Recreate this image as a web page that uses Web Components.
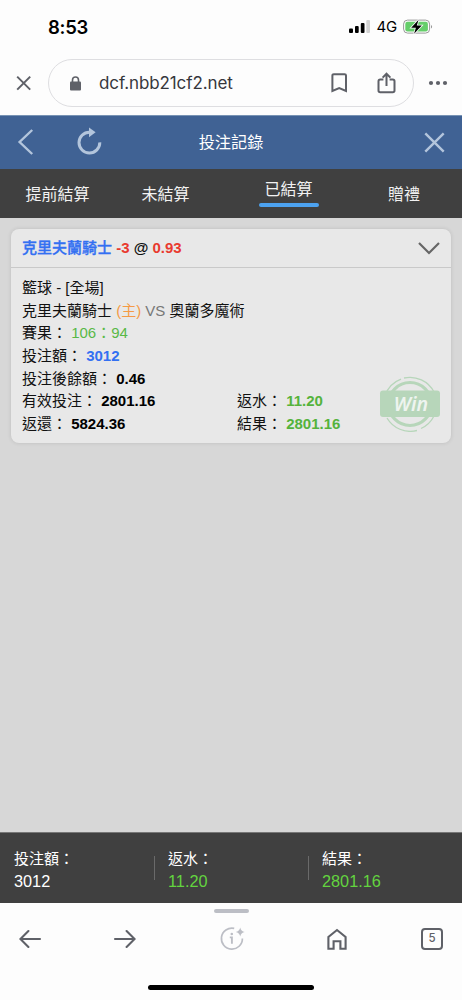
<!DOCTYPE html>
<html lang="zh-Hant">
<head>
<meta charset="utf-8">
<meta name="viewport" content="width=device-width, initial-scale=1">
<title>投注記錄</title>
<style>
  body {
    margin: 0;
    height: 1000px;
    display: flex;
    flex-direction: column;
    overflow: hidden;
    background: #d7d7d7;
    font-family: "Liberation Sans", "Noto Sans CJK TC", sans-serif;
    font-size: 15px;
  }

  main {
    flex: 1;
    padding: 11px;
  }
</style>
</head>
<body>
  <status-bar time="8:53" network="4G"></status-bar>
  <address-bar>dcf.nbb21cf2.net</address-bar>
  <page-header>投注記錄</page-header>
  <tab-bar>
    <tab-item>提前結算</tab-item>
    <tab-item>未結算</tab-item>
    <tab-item active>已結算</tab-item>
    <tab-item>贈禮</tab-item>
  </tab-bar>
  <main>
    <bet-card team="克里夫蘭騎士" handicap="-3" odds="0.93">
      <bet-field wide>籃球 - [全場]</bet-field>
      <bet-field wide>克里夫蘭騎士 <span style="color:#f59a45">(主)</span> <span style="color:#777">VS</span> 奧蘭多魔術</bet-field>
      <bet-field wide label="賽果" tone="score">106：94</bet-field>
      <bet-field wide label="投注額" tone="stake">3012</bet-field>
      <bet-field wide label="投注後餘額" tone="plain">0.46</bet-field>
      <bet-field label="有效投注" tone="plain">2801.16</bet-field>
      <bet-field label="返水" tone="win">11.20</bet-field>
      <bet-field label="返還" tone="plain">5824.36</bet-field>
      <bet-field label="結果" tone="win">2801.16</bet-field>
      <win-stamp slot="stamp">Win</win-stamp>
    </bet-card>
  </main>
  <summary-bar>
    <summary-item label="投注額">3012</summary-item>
    <summary-item label="返水" positive>11.20</summary-item>
    <summary-item label="結果" positive>2801.16</summary-item>
  </summary-bar>
  <browser-toolbar tabs="5"></browser-toolbar>

<script>
// Attach an open shadow root with the given markup
function render(element, html) {
  element.attachShadow({ mode: "open" }).innerHTML = html;
}

class StatusBar extends HTMLElement {
  connectedCallback() {
    render(this, `
      <style>
        :host {
          display: flex;
          align-items: center;
          box-sizing: border-box;
          height: 59px;
          padding: 0 29px 6px 48px;
          background: #fdfdfd;
          color: #000;
          font-family: Inter, sans-serif;
        }
        .time { flex: 1; font-size: 18.5px; font-weight: 600; letter-spacing: -0.3px; }
        .network { margin: 0 6px 0 7px; font-size: 15px; font-weight: 400; letter-spacing: -0.2px; }
        svg { display: block; }
      </style>
      <span class="time">${this.getAttribute("time")}</span>
      <svg width="21" height="13" viewBox="0 0 21 13">
        <rect x="0" y="8.5" width="4" height="4.5" rx="1"/>
        <rect x="6" y="6" width="3.7" height="7" rx="1"/>
        <rect x="11.8" y="3" width="3.7" height="10" rx="1"/>
        <rect x="17.3" y="0" width="3.7" height="13" rx="1" fill="#d2d2d2"/>
      </svg>
      <span class="network">${this.getAttribute("network")}</span>
      <svg width="30" height="16" viewBox="0 0 30 16">
        <rect x=".6" y="1.1" width="26" height="13" rx="4" fill="none" stroke="#999" stroke-width="1"/>
        <rect x="2.3" y="2.8" width="22.6" height="9.6" rx="2.2" fill="#65ce6a"/>
        <path d="M28 6v3.6c1.5-.6 1.5-3 0-3.6z" fill="#999"/>
        <path d="M15.6.7 8.2 8.8h4.7l-1.8 6 7.7-8.2h-5z" stroke="#fdfdfd" stroke-width="1.6" paint-order="stroke"/>
      </svg>
    `);
  }
}

class AddressBar extends HTMLElement {
  connectedCallback() {
    render(this, `
      <style>
        :host {
          display: flex;
          align-items: center;
          box-sizing: border-box;
          height: 56px;
          padding: 0 14px 8px 16px;
          background: #fdfdfd;
          color: #5f6168;
        }
        svg { display: block; fill: none; stroke: currentColor; stroke-width: 2; }
        .field {
          display: flex;
          align-items: center;
          flex: 1;
          box-sizing: border-box;
          height: 48px;
          margin: 0 14px 0 16px;
          padding: 0 17px 0 20px;
          border: 1.4px solid #dedee1;
          border-radius: 24px;
        }
        .url { flex: 1; margin-left: 17px; color: #36373c; font: 400 17px Inter, sans-serif; letter-spacing: -0.1px; }
        .share { margin-left: 29px; }
      </style>
      <svg width="16" height="16" viewBox="0 0 16 16"><path d="M1.2 1.6l13 13M14.2 1.6l-13 13"/></svg>
      <div class="field">
        <svg width="13" height="15" viewBox="0 0 13 15">
          <rect x="1" y="5.5" width="11" height="9" rx="1" fill="currentColor" stroke="none"/>
          <path d="M3.5 6V4a3 3 0 0 1 6 0v2" stroke-width="1.6"/>
        </svg>
        <span class="url"><slot></slot></span>
        <svg width="17" height="20" viewBox="0 0 17 20"><path d="M1.4 18V2.6q0-1.4 1.4-1.4h10.8q1.4 0 1.4 1.4V18l-6.8-3z"/></svg>
        <svg class="share" width="19" height="22" viewBox="0 0 19 22">
          <path d="M6.4 7.6H3.2q-1.7 0-1.7 1.7v9.2q0 1.7 1.7 1.7h12.6q1.7 0 1.7-1.7V9.3q0-1.7-1.7-1.7h-3.2M9.5 14V2M5.6 5.6l3.9-3.9 3.9 3.9"/>
        </svg>
      </div>
      <svg width="20" height="6" viewBox="0 0 20 6">
        <g fill="currentColor" stroke="none"><circle cx="3" cy="3" r="2.1"/><circle cx="10" cy="3" r="2.1"/><circle cx="17" cy="3" r="2.1"/></g>
      </svg>
    `);
  }
}

class PageHeader extends HTMLElement {
  connectedCallback() {
    render(this, `
      <style>
        :host {
          display: grid;
          grid-template-columns: 1fr auto 1fr;
          align-items: center;
          box-sizing: border-box;
          height: 54px;
          padding: 0 17px 1px;
          background: #406294;
          border-top: 1px solid #7893b4;
          color: #fff;
          font-size: 16.2px;
        }
        svg { display: block; fill: none; stroke: #b3c5dc; }
        .left { display: flex; align-items: center; gap: 43px; }
        .reload { margin-bottom: 3px; }
        .title { padding-bottom: 2px; }
        .right { justify-self: end; }
      </style>
      <div class="left">
        <svg width="17" height="26" viewBox="0 0 17 26" stroke-width="2.4"><path d="M15.2 1 2.6 13l12.6 12"/></svg>
        <svg class="reload" width="25" height="28" viewBox="0 0 25 28" stroke-width="3">
          <path d="M12.5 5.2a10.4 10.4 0 1 0 10.3 10.2"/>
          <path d="M12 .6l6.6 4.6-6.6 5z" fill="#b3c5dc" stroke="none"/>
        </svg>
      </div>
      <span class="title"><slot></slot></span>
      <svg class="right" width="21" height="21" viewBox="0 0 21 21" stroke-width="2.4"><path d="M1.3 1.3l18.4 18.4M19.7 1.3 1.3 19.7"/></svg>
    `);
  }
}

class TabBar extends HTMLElement {
  connectedCallback() {
    render(this, `
      <style>
        :host {
          display: grid;
          grid-template-columns: 115px 101px 145px 86px;
          height: 49px;
          background: #404040;
        }
      </style>
      <slot></slot>
    `);
  }
}

class TabItem extends HTMLElement {
  connectedCallback() {
    render(this, `
      <style>
        :host {
          display: flex;
          flex-direction: column;
          align-items: center;
          justify-content: center;
          padding-top: 2px;
          color: #f2f2f2;
          font-size: 16px;
          line-height: 24px;
        }
        :host([active])::after {
          content: "";
          width: 60px;
          height: 4px;
          margin-top: 1px;
          border-radius: 2px;
          background: #4ca2f0;
        }
        :host([active]) { padding: 0 0 2px; }
      </style>
      <span><slot></slot></span>
    `);
  }
}

class BetCard extends HTMLElement {
  connectedCallback() {
    render(this, `
      <style>
        :host {
          display: block;
          position: relative;
          box-sizing: border-box;
          height: 214px;
          border-radius: 8px;
          background: #e8e8e8;
          box-shadow: 0 0 4px rgba(0, 0, 0, .12);
          color: #111;
        }
        header {
          display: flex;
          align-items: center;
          justify-content: space-between;
          box-sizing: border-box;
          height: 39px;
          padding: 0 11px;
          border-bottom: 1px solid #c9c9c9;
          font-weight: bold;
        }
        .name { margin-top: -3px; }
        .team { color: #3370f2; font-weight: 500; -webkit-text-stroke: .35px #3370f2; }
        .red { color: #e93a2f; }
        svg { display: block; }
        .fields {
          display: grid;
          grid-template-columns: 215px 1fr;
          grid-auto-rows: 22.7px;
          padding: 9px 11px;
        }
        ::slotted([slot="stamp"]) { position: absolute; right: 10px; bottom: 11px; }
      </style>
      <header>
        <span class="name"><span class="team">${this.getAttribute("team")}</span> <span class="red">${this.getAttribute("handicap")}</span> @ <span class="red">${this.getAttribute("odds")}</span></span>
        <svg width="22" height="13" viewBox="0 0 22 13"><path d="M1 1l10 10L21 1" fill="none" stroke="#666" stroke-width="2.2"/></svg>
      </header>
      <div class="fields"><slot></slot></div>
      <slot name="stamp"></slot>
    `);
  }
}

class BetField extends HTMLElement {
  connectedCallback() {
    const label = this.getAttribute("label");
    render(this, `
      <style>
        :host { display: block; line-height: 22.7px; white-space: nowrap; }
        :host([wide]) { grid-column: 1 / -1; }
        :host([tone]) .value { font-weight: bold; color: #000; }
        :host([tone="score"]) .value { font-weight: normal; color: #58b947; }
        :host([tone="stake"]) .value { color: #3370f2; }
        :host([tone="win"]) .value { color: #55b33c; }
      </style>
      ${label ? `<span>${label}：</span> ` : ""}<span class="value"><slot></slot></span>
    `);
  }
}

class WinStamp extends HTMLElement {
  connectedCallback() {
    render(this, `
      <style>
        :host { display: grid; place-items: center; width: 62px; height: 56px; }
        svg, span { grid-area: 1 / 1; }
        svg { display: block; fill: none; stroke: #b7d6ba; }
        span {
          padding-left: 2px;
          color: #eef4ef;
          font: italic 600 19.5px "Noto Sans", sans-serif;
          line-height: 26px;
          z-index: 1;
        }
      </style>
      <svg width="62" height="56" viewBox="0 0 62 56">
        <circle cx="31" cy="28" r="21.5" stroke-width="3.2"/>
        <path d="M6 20A26.5 26.5 0 0 1 22 3.2M25 2A27 27 0 0 1 55 16M8 42A27 27 0 0 0 38 54.5M42 52.5A27 27 0 0 0 55 40" stroke-width="1.3"/>
        <rect x="1" y="14.5" width="60" height="26.5" rx="3" fill="#b7d6ba" stroke="none"/>
      </svg>
      <span><slot></slot></span>
    `);
  }
}

class SummaryBar extends HTMLElement {
  connectedCallback() {
    render(this, `
      <style>
        :host {
          display: grid;
          grid-template-columns: repeat(3, 1fr);
          align-items: center;
          box-sizing: border-box;
          height: 71px;
          padding-top: 4px;
          background: #404040;
          border-top: 1px solid #777;
        }
      </style>
      <slot></slot>
    `);
  }
}

class SummaryItem extends HTMLElement {
  connectedCallback() {
    render(this, `
      <style>
        :host { display: flex; align-items: center; color: #fff; }
        :host::before {
          content: "";
          width: 1px;
          height: 24px;
          margin: 0 13px 4px 0;
          background: #6a6a6a;
        }
        :host(:first-child)::before { background: none; }
        div { line-height: 22px; }
        .value { font-size: 16.3px; }
        :host([positive]) .value { color: #63d43f; }
      </style>
      <div>
        <div>${this.getAttribute("label")}：</div>
        <div class="value"><slot></slot></div>
      </div>
    `);
  }
}

class BrowserToolbar extends HTMLElement {
  connectedCallback() {
    render(this, `
      <style>
        :host {
          display: flex;
          flex-direction: column;
          align-items: center;
          box-sizing: border-box;
          height: 97px;
          padding: 6px 0 8px;
          background: #fdfdfd;
          color: #5f6168;
        }
        .grip { width: 35px; height: 4px; border-radius: 2px; background: #bcbec5; }
        nav {
          display: flex;
          align-items: center;
          box-sizing: border-box;
          width: 100%;
          height: 28px;
          margin: 12px 0 32px;
          padding: 0 19px;
        }
        svg { display: block; fill: none; stroke: currentColor; stroke-width: 2.1; }
        .forward { margin-left: 71px; }
        .info { margin: 0 auto 2px 83px; color: #bcbec5; }
        .home { margin-right: 74px; }
        .tabs {
          display: grid;
          place-items: center;
          box-sizing: border-box;
          width: 22px;
          height: 22px;
          border: 2px solid;
          border-radius: 4px;
          font: 500 11.5px/1 Inter, sans-serif;
        }
        .home-indicator { width: 166px; height: 5px; border-radius: 3px; background: #000; }
      </style>
      <div class="grip"></div>
      <nav>
        <svg width="23" height="20" viewBox="0 0 23 20" stroke-linecap="round"><path d="M21 10H1.8M9.4 2 1.4 10l8 8"/></svg>
        <svg class="forward" width="23" height="20" viewBox="0 0 23 20" stroke-linecap="round"><path d="M2 10h19.2M13.6 2l8 8-8 8"/></svg>
        <svg class="info" width="27" height="27" viewBox="0 0 27 27">
          <path d="M15.2 3.4A10.5 10.5 0 1 0 23.4 13.5" stroke-width="1.7"/>
          <path d="M10.8 12.4h2.1v6.4" stroke-width="1.9"/>
          <circle cx="12.8" cy="9" r="1.3" fill="currentColor" stroke="none"/>
          <path d="M21.2 2.4q.8 3.7 4.5 4.5-3.7.8-4.5 4.5-.8-3.7-4.5-4.5 3.7-.8 4.5-4.5z" fill="currentColor" stroke="none"/>
        </svg>
        <svg class="home" width="20" height="23" viewBox="0 0 20 23"><path d="M1.4 20.8V9L10 2l8.6 7v11.8h-5.2v-7.6H6.6v7.6z"/></svg>
        <div class="tabs">${this.getAttribute("tabs")}</div>
      </nav>
      <div class="home-indicator"></div>
    `);
  }
}

// Let the browser know about the new elements
customElements.define("status-bar", StatusBar);
customElements.define("address-bar", AddressBar);
customElements.define("page-header", PageHeader);
customElements.define("tab-bar", TabBar);
customElements.define("tab-item", TabItem);
customElements.define("bet-card", BetCard);
customElements.define("bet-field", BetField);
customElements.define("win-stamp", WinStamp);
customElements.define("summary-bar", SummaryBar);
customElements.define("summary-item", SummaryItem);
customElements.define("browser-toolbar", BrowserToolbar);
</script>
</body>
</html>
